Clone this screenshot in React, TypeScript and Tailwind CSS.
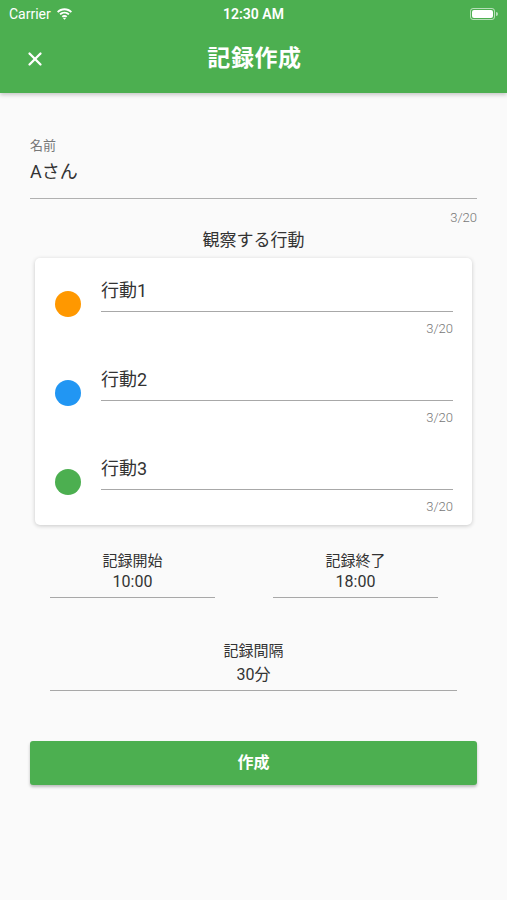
import { X } from "lucide-react";

const BEHAVIORS = [
  { name: "行動1", color: "bg-[#FF9800]" },
  { name: "行動2", color: "bg-[#2196F3]" },
  { name: "行動3", color: "bg-[#4CAF50]" },
];

const FONT = "font-['Roboto','Noto_Sans_CJK_JP',sans-serif]";

function StatusBar() {
  return (
    <div className="h-[28px] flex items-center justify-between px-[9px] text-white text-[14px]">
      <div className="flex items-center gap-[5px] w-[120px]">
        <span>Carrier</span>
        <svg width="17" height="12" viewBox="0 0 17 12" fill="white">
          <path d="M8.5 2.2c2.4 0 4.6.9 6.2 2.5l1.3-1.3C14 1.4 11.4.3 8.5.3S3 1.4 1 3.4l1.3 1.3C3.9 3.1 6.1 2.2 8.5 2.2z" />
          <path d="M8.5 5.6c1.5 0 2.8.6 3.8 1.5l1.3-1.3C12.3 4.5 10.5 3.7 8.5 3.7S4.7 4.5 3.4 5.8l1.3 1.3c1-.9 2.3-1.5 3.8-1.5z" />
          <path d="M8.5 9c.6 0 1.1.2 1.5.6l1.3-1.3C10.6 7.5 9.6 7.1 8.5 7.1s-2.1.4-2.8 1.2L7 9.6c.4-.4.9-.6 1.5-.6z" />
          <path d="M8.5 11.8 10 10.3c-.4-.4-.9-.6-1.5-.6s-1.1.2-1.5.6z" />
        </svg>
      </div>
      <span className="font-semibold">12:30 AM</span>
      <div className="w-[120px] flex justify-end">
        <div className="flex items-center gap-[1px]">
          <div className="w-[25px] h-[12px] rounded-[3px] border border-white/60 p-[1px]">
            <div className="w-full h-full bg-white rounded-[2px]" />
          </div>
          <div className="w-[2px] h-[4px] bg-white/60 rounded-r-sm" />
        </div>
      </div>
    </div>
  );
}

function BehaviorRow({ name, color }: { name: string; color: string }) {
  return (
    <div className="flex items-start h-[89px]">
      <div className={`w-[26px] h-[26px] rounded-full ${color} mt-[31px] ml-[20px] shrink-0`} />
      <div className="flex-1 ml-[20px] mr-[19px]">
        <div className="h-[52px] border-b-[1.5px] border-[#a8a8a8] flex items-end pb-[11px]">
          <span className="text-[18px] text-[#333] leading-none">{name}</span>
        </div>
        <div className="text-right text-[13px] font-light text-[#777] mt-[10px] leading-none">3/20</div>
      </div>
    </div>
  );
}

export default function App() {
  return (
    <div className={`w-[507px] h-[900px] bg-[#fafafa] ${FONT} overflow-hidden`}>
      <header className="bg-[#4CAF50] h-[93px] shadow-[0_2px_4px_rgba(0,0,0,0.2)] relative z-10">
        <StatusBar />
        <div className="relative h-[65px] flex items-center justify-center">
          <X className="absolute left-[24px] top-[20px] w-[22px] h-[22px] text-white" strokeWidth={2.5} />
          <h1 className="text-white text-[23px] font-bold tracking-wide -mt-[2px] ml-[2px]">記録作成</h1>
        </div>
      </header>

      <main className="px-[30px]">
        {/* 名前 */}
        <div className="pt-[46px]">
          <div className="text-[13px] text-[#777] leading-none">名前</div>
          <div className="border-b-[1.5px] border-[#b0b0b0] h-[47px] pt-[9px]">
            <span className="text-[18px] text-[#333] leading-none">Aさん</span>
          </div>
          <div className="text-right text-[13px] font-light text-[#777] mt-[12px] leading-none">3/20</div>
        </div>

        <div className="text-center text-[17px] text-[#333] mt-[4px] leading-[24px]">観察する行動</div>

        <div className="mx-[5px] mt-[6px] bg-white rounded-[5px] shadow-[0_1px_4px_rgba(0,0,0,0.2)] pt-[2px] h-[267px]">
          {BEHAVIORS.map((b) => (
            <BehaviorRow key={b.name} name={b.name} color={b.color} />
          ))}
        </div>

        <div className="flex justify-between mt-[26px] px-[20px]">
          <div className="w-[165px] flex flex-col items-center border-b-[1.5px] border-[#a8a8a8] pb-[4px]">
            <span className="text-[15px] text-[#333] leading-[20px]">記録開始</span>
            <span className="text-[16px] text-[#333] leading-[22px]">10:00</span>
          </div>
          <div className="w-[165px] mr-[19px] flex flex-col items-center border-b-[1.5px] border-[#a8a8a8] pb-[4px]">
            <span className="text-[15px] text-[#333] leading-[20px]">記録終了</span>
            <span className="text-[16px] text-[#333] leading-[22px]">18:00</span>
          </div>
        </div>

        <div className="mt-[43px] px-[20px] flex">
          <div className="w-[408px] flex flex-col items-center border-b-[1.5px] border-[#a8a8a8] pb-[4px]">
            <span className="text-[15px] text-[#333] leading-[20px]">記録間隔</span>
            <span className="text-[16px] text-[#333] leading-[22px] mt-[3px]">30分</span>
          </div>
        </div>

        <button className="mt-[50px] w-full h-[44px] bg-[#4CAF50] rounded-[3px] shadow-[0_2px_3px_rgba(0,0,0,0.25)] text-white text-[16px] font-bold">
          作成
        </button>
      </main>
    </div>
  );
}
